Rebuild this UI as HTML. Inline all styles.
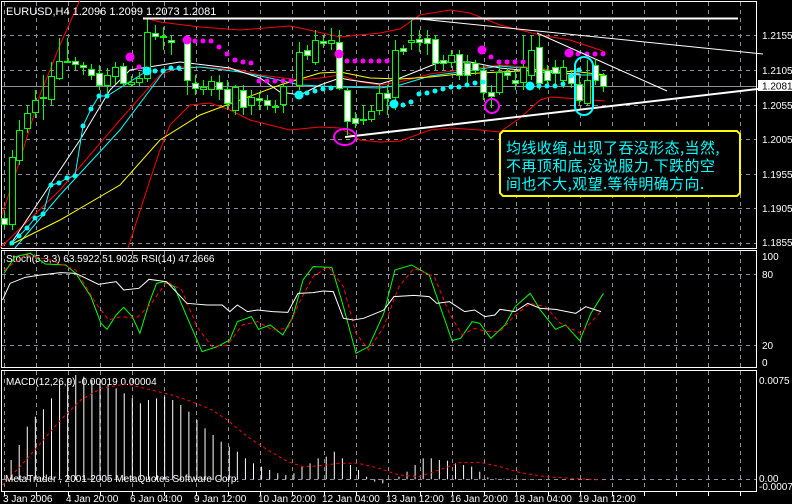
<!DOCTYPE html>
<html><head><meta charset="utf-8"><style>
html,body{margin:0;padding:0;background:#000;width:792px;height:504px;overflow:hidden}
svg{display:block}
text{font-family:"Liberation Sans","Noto Sans CJK SC",sans-serif;fill:#fff}
</style></head><body>
<svg id="s" width="792" height="504" viewBox="0 0 792 504" xmlns="http://www.w3.org/2000/svg">
<g id="grid" stroke="#8a8f99" stroke-width="1" stroke-dasharray="4,4" fill="none"></g>
<g stroke="#8a8f99" stroke-dasharray="4,4">
<line x1="2" y1="35.5" x2="756" y2="35.5"/><line x1="2" y1="70.5" x2="756" y2="70.5"/><line x1="2" y1="105.5" x2="756" y2="105.5"/><line x1="2" y1="139.5" x2="756" y2="139.5"/><line x1="2" y1="174.5" x2="756" y2="174.5"/><line x1="2" y1="208.5" x2="756" y2="208.5"/><line x1="2" y1="243.5" x2="756" y2="243.5"/>
<line x1="2" y1="274.5" x2="756" y2="274.5"/><line x1="2" y1="345.5" x2="756" y2="345.5"/><line x1="2" y1="479.5" x2="756" y2="479.5"/>
</g>
<line x1="2" y1="86.5" x2="756" y2="86.5" stroke="#8a8f99"/>
<g stroke="#fff" fill="none"><rect x="1.5" y="1.5" width="755" height="247"/><rect x="1.5" y="250.5" width="755" height="117"/><rect x="1.5" y="370.5" width="755" height="121"/></g>
<g fill="none" stroke-width="1">
<polyline stroke="#f00" points="2,215 20,160 40,95 60,45 80,0"/>
<polyline stroke="#f00" points="145,18 160,22 200,27 240,30 290,26 300,28 340,37 380,33 400,29 420,15 450,10 470,13 500,25 540,35 570,40 600,50 605,52"/>
<polyline stroke="#f00" points="128,248 150,180 160,150 170,125 190,105 210,103 230,110 250,120 270,125 290,130 320,127 340,128 360,140 380,142 400,141 430,130 450,128 480,130 500,132 520,118 540,100 550,97 580,99 605,101"/>
<polyline stroke="#f00" points="0,248 60,190 120,120 160,75 180,67 200,67 240,70 260,75 300,80 320,78 340,75 360,82 380,85 400,82 430,74 460,70 500,65 540,68 570,75 605,75"/>
<polyline stroke="#0ff" points="15,248 60,195 120,130 165,70 200,67 240,72 270,78 300,85 340,87 380,88 400,85 430,76 460,72 500,66 540,70 580,75 605,75"/>
<polyline stroke="#fff" points="10,245 40,200 80,140 110,90 130,70 180,62 230,68 260,78 280,92 300,95 320,85 340,78 350,80 380,84 400,78 440,62 470,62 500,68 540,72 580,74"/>
<polyline stroke="#ff0" points="10,245 60,220 120,185 160,140 200,115 240,100 280,85 320,73 340,72 370,78 400,79 430,77 460,74 500,72 540,70 580,72 605,75"/>
<polyline stroke="#0ff" points="12,243 19,236 27,228 35,218 43,214 51,185 59,183 67,178 75,176 83,126 91,109 99,96 107,96 147,71"/>
</g>
<g id="candles"></g>
<g id="dots"></g>
<line x1="143" y1="18.5" x2="738" y2="18.5" stroke="#fff" stroke-width="2"/>
<line x1="410" y1="18" x2="763" y2="54" stroke="#fff"/>
<line x1="537" y1="33" x2="667" y2="91" stroke="#fff"/>
<line x1="345" y1="137" x2="792" y2="85" stroke="#fff" stroke-width="2"/>
<ellipse cx="345" cy="137" rx="11" ry="8" fill="none" stroke="#f0f" stroke-width="2"/>
<circle cx="492" cy="106" r="7" fill="none" stroke="#f0f" stroke-width="2"/>
<rect x="575" y="57" width="18" height="58" rx="9" fill="none" stroke="#0ff" stroke-width="2"/>
<path d="M503,131 H737 L740,134 V193 L737,196 H503 L500,193 V134 Z" fill="#000" stroke="#ff0" stroke-width="2"/>
<g font-size="15" letter-spacing="0.4">
<text x="506" y="153" style="fill:#0ff;font-family:'Noto Sans CJK SC',sans-serif">均线收缩,出现了吞没形态,当然,</text>
<text x="506" y="171" style="fill:#0ff;font-family:'Noto Sans CJK SC',sans-serif">不再顶和底,没说服力.下跌的空</text>
<text x="506" y="189" style="fill:#0ff;font-family:'Noto Sans CJK SC',sans-serif">间也不大,观望.等待明确方向.</text>
</g>
<text x="6" y="15" font-size="11">EURUSD,H4  1.2096 1.2099 1.2073 1.2081</text>
<g font-size="10">
<text x="762" y="39">1.2155</text><text x="762" y="74">1.2105</text><text x="762" y="109">1.2055</text><text x="762" y="143">1.2005</text><text x="762" y="178">1.1955</text><text x="762" y="212">1.1905</text><text x="762" y="246">1.1855</text>
<rect x="758" y="80" width="34" height="11" fill="#fff"/><text x="762" y="89.5" style="fill:#000">1.2081</text>
<text x="762" y="260">100</text><text x="762" y="278">80</text><text x="762" y="349">20</text><text x="762" y="366">0</text>
<text x="759" y="384">0.0075</text><text x="759" y="482">0.00</text><text x="759" y="490">-0.00072</text>
</g>
<text x="6" y="262" font-size="10">Stoch(5,3,3) 63.5922 51.9025  RSI(14) 47.2666</text>
<g transform="translate(0,250) scale(0.505,0.3333)" fill="none">
<polyline vector-effect="non-scaling-stroke" stroke="#0f0" points="8,70 30,20 60,10 90,42 130,45 150,70 180,140 200,220 212,238 230,195 245,172 262,200 277,250 295,160 310,100 325,95 345,110 370,200 400,305 430,290 455,270 470,215 498,200 512,238 535,225 560,255 580,200 600,90 620,50 657,52 680,170 705,310 730,290 760,190 782,60 815,45 850,75 895,272 912,265 935,215 950,220 972,265 1000,225 1020,170 1050,130 1070,180 1100,238 1120,225 1148,272 1170,190 1195,130"/>
<polyline vector-effect="non-scaling-stroke" stroke="#f00" stroke-dasharray="4,3" points="8,60 50,15 100,30 150,60 190,160 215,210 240,200 270,205 300,160 330,95 360,120 390,230 420,290 450,285 480,225 510,215 540,240 570,235 595,150 620,80 650,50 680,110 705,250 730,300 760,230 790,110 820,55 860,80 890,190 915,255 940,235 965,245 990,245 1020,195 1050,160 1080,170 1110,220 1150,250 1190,185"/>
<polyline vector-effect="non-scaling-stroke" stroke="#fff" points="5,150 20,100 50,82 80,75 120,68 150,70 195,103 230,95 245,120 275,115 295,88 330,95 370,160 410,165 440,165 455,185 470,165 490,185 510,180 540,185 570,187 590,130 620,128 640,123 660,125 680,205 700,210 720,205 760,180 780,140 820,136 850,140 865,160 890,155 920,185 940,180 960,200 980,195 990,178 1020,185 1045,160 1070,175 1100,178 1140,190 1160,170 1190,185"/>
</g>
<text x="6" y="385" font-size="10">MACD(12,26,9) -0.00019 0.00004</text>
<g id="macd" transform="translate(0,250) scale(0.505,0.3333)" fill="none"></g>
<text x="5" y="482" font-size="10">MetaTrader , 2001-2005 MetaQuotes Software Corp.</text>
<g font-size="10">
<text x="3" y="502">3 Jan 2006</text><text x="66" y="502">4 Jan 20:00</text><text x="130" y="502">6 Jan 04:00</text><text x="194" y="502">9 Jan 12:00</text><text x="258" y="502">10 Jan 20:00</text><text x="322" y="502">12 Jan 04:00</text><text x="386" y="502">13 Jan 12:00</text><text x="450" y="502">16 Jan 20:00</text><text x="514" y="502">18 Jan 04:00</text><text x="578" y="502">19 Jan 12:00</text>
</g>
</svg>
<script>
var NS="http://www.w3.org/2000/svg";
function el(p,t,a){var e=document.createElementNS(NS,t);for(var k in a)e.setAttribute(k,a[k]);p.appendChild(e);return e;}
var g=document.getElementById('grid');
for(var x=4;x<756;x+=32){el(g,'line',{x1:x+.5,y1:2,x2:x+.5,y2:248});el(g,'line',{x1:x+.5,y1:251,x2:x+.5,y2:367});el(g,'line',{x1:x+.5,y1:371,x2:x+.5,y2:491});el(g,'line',{x1:x+.5,y1:492,x2:x+.5,y2:496,'stroke-dasharray':'none',stroke:'#fff'});}
var C=[[4,218,224,212,228,1],[12,157,224,150,230,0],[19,130,160,120,165,0],[27,113,128,105,133,0],[35,100,112,90,118,0],[43,97,98,75,120,0],[51,76,99,62,105,0],[59,61,78,38,80,0],[67,61,62,38,62,0],[75,61,64,57,70,1],[83,65,67,62,75,1],[91,69,75,64,80,1],[99,73,85,65,90,1],[107,75,85,68,95,0],[115,67,76,62,84,0],[123,66,83,63,87,1],[131,82,84,76,87,0],[139,78,82,72,86,0],[147,32,78,18,82,0],[155,33,36,25,40,1],[163,36,37,27,50,0],[171,40,42,35,55,1],[187,40,80,37,95,1],[195,83,88,75,95,1],[203,87,89,80,95,0],[211,81,89,76,96,0],[219,82,89,75,100,1],[227,89,103,80,110,1],[235,87,110,85,115,0],[243,90,107,85,115,1],[251,97,105,90,115,0],[259,98,100,93,110,1],[267,100,105,95,110,1],[275,106,107,100,113,0],[283,86,104,80,113,0],[299,52,85,42,90,0],[307,50,55,45,60,1],[315,40,62,30,65,0],[323,41,43,35,48,1],[331,40,43,28,50,0],[339,42,88,30,90,1],[347,90,121,88,135,1],[355,118,123,112,128,1],[363,119,120,105,125,0],[371,111,119,105,122,0],[379,93,110,85,115,0],[387,93,98,85,115,1],[395,50,97,40,110,0],[403,48,51,45,55,1],[411,40,42,20,50,0],[419,39,42,30,52,1],[427,38,43,30,55,1],[435,39,63,35,70,1],[443,60,63,55,70,1],[451,55,62,50,68,0],[459,54,75,50,80,1],[467,63,75,55,85,1],[475,63,70,60,75,1],[483,70,92,65,100,1],[491,92,96,85,108,1],[499,72,92,65,95,0],[507,72,75,68,80,1],[515,80,83,70,90,1],[523,67,82,35,90,0],[531,50,75,35,80,0],[539,47,83,35,90,1],[547,70,80,65,85,1],[555,67,73,60,85,1],[563,67,80,60,88,0],[571,75,83,70,88,1],[579,84,100,75,105,1],[587,80,103,60,105,0],[595,65,80,60,85,1],[603,75,86,73,92,1]];
var cg=document.getElementById('candles');
C.forEach(function(c){el(cg,'line',{x1:c[0]+.5,y1:c[3],x2:c[0]+.5,y2:c[4],stroke:'#0f0'});el(cg,'rect',{x:c[0]-2.5,y:c[1]+.5,width:6,height:Math.max(c[2]-c[1],1),fill:c[5]?'#fff':'#000',stroke:'#0f0'});});
var dg=document.getElementById('dots');
var cy=[[299,95,1],[307,93],[315,91],[323,89],[331,88],[394,104,1],[403,105],[411,102],[419,94],[427,93],[435,91],[443,89],[451,87],[459,87],[467,85],[475,83],[483,82],[530,86,1],[539,86],[547,86],[555,86],[563,84],[571,76],[579,70],[12,243],[19,236],[27,228],[35,218],[43,214],[51,185],[59,183],[67,178],[75,176],[83,126],[91,109],[99,96],[107,96],[147,71,1],[155,71],[163,71],[171,68],[179,68]];
cy.forEach(function(d){el(dg,'circle',{cx:d[0],cy:d[1],r:d[2]?4.5:2.5,fill:'#0ff'});});
var mg=[[130,57,1],[139,67],[187,40,1],[195,41],[203,41],[211,41],[219,47],[227,54],[235,60],[243,62],[251,63],[259,81],[267,81],[275,81],[283,81],[291,81],[339,54,1],[347,61],[355,61],[363,61],[371,61],[379,61],[387,61],[482,50,1],[491,57],[499,62],[507,62],[515,62],[523,62],[569,53,1],[578,54],[587,54],[595,54],[603,54]];
mg.forEach(function(d){el(dg,'circle',{cx:d[0],cy:d[1],r:d[2]?4.5:2.5,fill:'#f0f'});});
var H=[630,585,530,500,478,445,392,385,375,380,390,395,405,415,430,445,460,450,445,440,450,465,485,510,535,555,575,590,605,625,640,650,660,670,675,670,650,640,625,620,605,625,645,660,680,695,700,690,680,665,645,625,625,630,632,640,645,650,665,682,685,686,686,687,687,687,687,688,688,688,688,688,688,688];
var m=document.getElementById('macd');
H.forEach(function(h,i){var x=22+i*16;el(m,'line',{x1:x,y1:688,x2:x,y2:h,stroke:'#fff','vector-effect':'non-scaling-stroke'});});
el(m,'polyline',{stroke:'#f00','stroke-dasharray':'3,3','vector-effect':'non-scaling-stroke',points:"5,705 40,650 80,580 120,510 160,450 200,415 250,402 300,420 340,435 380,455 420,480 450,510 490,560 530,600 570,635 600,650 630,648 670,640 710,640 750,655 790,675 830,680 870,660 910,638 950,637 990,650 1030,668 1080,680 1130,685 1190,690"});
</script>
</body></html>
